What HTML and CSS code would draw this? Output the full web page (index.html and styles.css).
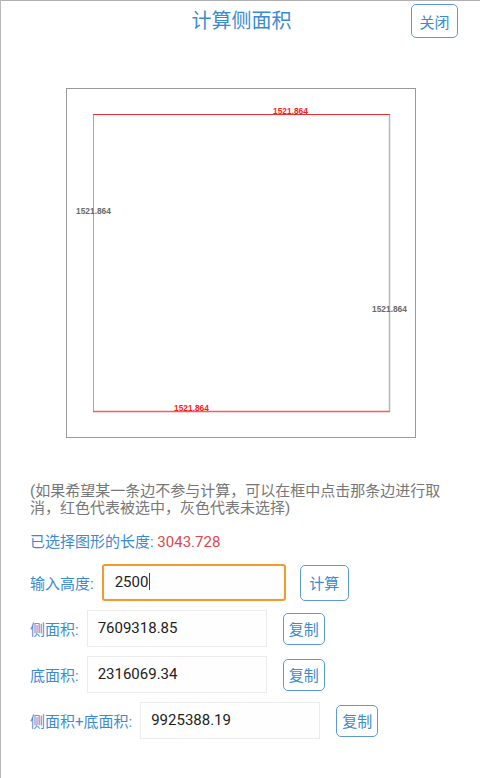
FILE: index.html
```html
<!DOCTYPE html>
<html lang="zh">
<head>
<meta charset="utf-8">
<title>计算侧面积</title>
<link rel="stylesheet" href="styles.css">
</head>
<body>
<div class="page">
  <header class="header">
    <h1 class="title">计算侧面积</h1>
    <button class="btn btn-close">关闭</button>
  </header>

  <div class="canvas-box">
    <svg class="drawing" width="350" height="350" viewBox="0 0 350 350">
      <rect x="0.5" y="0.5" width="349" height="349" fill="#fff" stroke="#9a9a9a" stroke-width="1"/>
      <line x1="27.5" y1="26" x2="27.5" y2="323.5" stroke="#a8a8a8" stroke-width="1"/>
      <line x1="323.5" y1="26" x2="323.5" y2="323.5" stroke="#b8b8b8" stroke-width="1.5"/>
      <line x1="27" y1="26.5" x2="324" y2="26.5" stroke="#f03030" stroke-width="1"/>
      <line x1="27" y1="323.5" x2="324" y2="323.5" stroke="#f06060" stroke-width="1.5"/>
      <text class="lbl lbl-red" x="207" y="25.5">1521.864</text>
      <text class="lbl lbl-red" x="108" y="322.5">1521.864</text>
      <text class="lbl lbl-gray" x="10" y="126">1521.864</text>
      <text class="lbl lbl-gray" x="306" y="224">1521.864</text>
    </svg>
  </div>

  <p class="hint">(如果希望某一条边不参与计算，可以在框中点击那条边进行取消，红色代表被选中，灰色代表未选择)</p>

  <p class="selected">已选择图形的长度: <span class="selected-value">3043.728</span></p>

  <div class="form">
    <div class="row">
      <span class="label">输入高度:</span>
      <div class="field field-focus">2500<span class="caret"></span></div>
      <button class="btn btn-calc">计算</button>
    </div>
    <div class="row">
      <span class="label">侧面积:</span>
      <div class="field">7609318.85</div>
      <button class="btn btn-copy">复制</button>
    </div>
    <div class="row">
      <span class="label">底面积:</span>
      <div class="field">2316069.34</div>
      <button class="btn btn-copy">复制</button>
    </div>
    <div class="row">
      <span class="label">侧面积+底面积:</span>
      <div class="field">9925388.19</div>
      <button class="btn btn-copy">复制</button>
    </div>
  </div>
</div>
</body>
</html>
```

FILE: styles.css
```css
html, body {
  margin: 0;
  padding: 0;
  background: #fff;
}

body {
  font-family: "Roboto", "Noto Sans CJK SC", sans-serif;
  color: #222;
}

.page {
  width: 480px;
  height: 778px;
  box-sizing: border-box;
  border-top: 1px solid #b0b0b0;
  border-left: 1px solid #b8b8b8;
  overflow: hidden;
}

.header {
  position: relative;
  height: 41px;
}

.title {
  margin: 0;
  text-align: center;
  font-size: 20px;
  font-weight: normal;
  line-height: 40px;
  color: #3b8bd2;
  padding-left: 2px;
}

.btn {
  font-family: "Noto Sans CJK SC", sans-serif;
  background: #fff;
  color: #3b8bd2;
  border: 1.5px solid #5b9ad6;
  border-radius: 5px;
  padding: 0;
  font-size: 15px;
  line-height: 1;
  box-sizing: border-box;
}

.btn-close {
  position: absolute;
  top: 3px;
  right: 22px;
  width: 47px;
  height: 34px;
}

.canvas-box {
  margin: 46px 0 0 65px;
  width: 350px;
  height: 350px;
}

.drawing {
  display: block;
}

.lbl {
  font-family: "Liberation Sans", Arial, sans-serif;
  font-size: 8.4px;
  font-weight: bold;
}

.lbl-red {
  fill: #ff1a1a;
}

.lbl-gray {
  fill: #6a6a6a;
}

.hint {
  margin: 45px 30px 0 29px;
  font-size: 15px;
  line-height: 17px;
  color: #777;
}

.selected {
  margin: 15px 0 0 29px;
  font-size: 15px;
  line-height: 20px;
  color: #3b8bd2;
}

.selected-value {
  color: #e04848;
}

.form {
  margin: 12px 0 0 29px;
  display: flex;
  flex-direction: column;
  gap: 9px;
}

.row {
  display: flex;
  align-items: center;
  height: 37px;
}

.label {
  font-size: 15px;
  color: #3b8bd2;
  margin-right: 8px;
}

.field {
  width: 180px;
  height: 37px;
  box-sizing: border-box;
  border: 1px solid #ececec;
  background: #fefefe;
  font-size: 15px;
  line-height: 35px;
  padding-left: 10px;
  color: #222;
  margin-right: 16px;
}

.field-focus {
  width: 184px;
  border: 2px solid #f39a2c;
  border-radius: 3px;
  line-height: 33px;
  padding-left: 11px;
  margin-right: 14px;
  box-shadow: inset 0 0 2px rgba(0,0,0,0.08);
}

.caret {
  display: inline-block;
  width: 1px;
  height: 17px;
  background: #444;
  vertical-align: -3px;
  margin-left: 1px;
}

.btn-calc {
  width: 49px;
  height: 36px;
}

.btn-copy {
  width: 42px;
  height: 32px;
}
```
